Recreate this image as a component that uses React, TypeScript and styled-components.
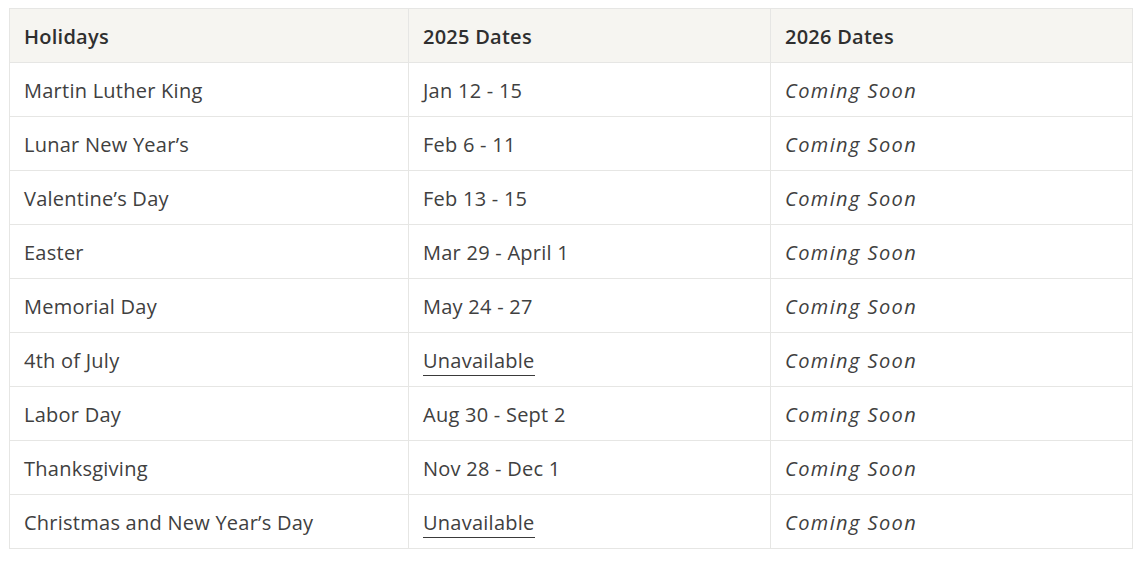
import React from "react";
import styled, { createGlobalStyle } from "styled-components";

const Global = createGlobalStyle`
  body { margin: 0; background: #fff; font-family: "Open Sans", Lato, sans-serif; }
`;

const Wrap = styled.div`
  padding: 8px 9px 0 9px;
`;

const Table = styled.table`
  width: 1123px;
  border-collapse: collapse;
  table-layout: fixed;
  color: #404040;
  font-size: 20px;
  line-height: 26px;
  letter-spacing: 0.25px;
`;

const Th = styled.th`
  background: #f6f5f1;
  border: 1px solid #e6e6e4;
  height: 51px;
  padding: 2px 14px 0;
  text-align: left;
  font-weight: 600;
  color: #2f2f2f;
`;

const Td = styled.td<{ $italic?: boolean }>`
  border: 1px solid #e6e6e4;
  height: 51px;
  padding: 2px 14px 0;
  font-style: ${(p) => (p.$italic ? "italic" : "normal")};
  letter-spacing: ${(p) => (p.$italic ? "1.4px" : "0.25px")};
`;

const Link = styled.span`
  border-bottom: 1px solid #3a3a3a;
  padding-bottom: 1px;
`;

const rows: [string, string][] = [
  ["Martin Luther King", "Jan 12 - 15"],
  ["Lunar New Year’s", "Feb 6 - 11"],
  ["Valentine’s Day", "Feb 13 - 15"],
  ["Easter", "Mar 29 - April 1"],
  ["Memorial Day", "May 24 - 27"],
  ["4th of July", ""],
  ["Labor Day", "Aug 30 - Sept 2"],
  ["Thanksgiving", "Nov 28 - Dec 1"],
  ["Christmas and New Year’s Day", ""],
];

export default function App() {
  return (
    <Wrap>
      <Global />
      <Table>
        <colgroup>
          <col style={{ width: 399 }} />
          <col style={{ width: 362 }} />
          <col style={{ width: 362 }} />
        </colgroup>
        <thead>
          <tr>
            <Th>Holidays</Th>
            <Th>2025 Dates</Th>
            <Th>2026 Dates</Th>
          </tr>
        </thead>
        <tbody>
          {rows.map(([h, d]) => (
            <tr key={h}>
              <Td>{h}</Td>
              <Td>{d ? d : <Link>Unavailable</Link>}</Td>
              <Td $italic>Coming Soon</Td>
            </tr>
          ))}
        </tbody>
      </Table>
    </Wrap>
  );
}
